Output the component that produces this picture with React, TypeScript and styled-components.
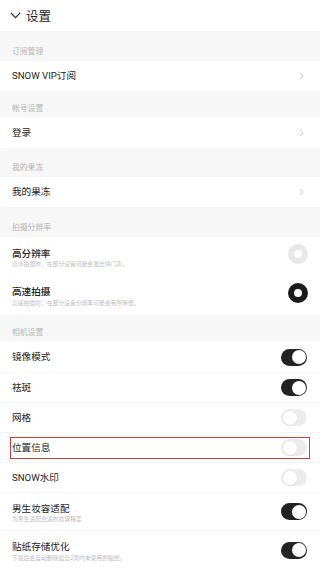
import React from "react";
import styled, { createGlobalStyle, css } from "styled-components";

const Global = createGlobalStyle`
  html, body { margin: 0; padding: 0; background: #ffffff; }
  body { font-family: "Roboto", "Noto Sans CJK SC", sans-serif; -webkit-font-smoothing: antialiased; }
  * { box-sizing: border-box; }
`;

const Page = styled.div`
  width: 320px;
  background: #ffffff;
  display: flex;
  flex-direction: column;
`;

const Header = styled.div`
  height: 31px;
  display: flex;
  align-items: center;
  gap: 5px;
  padding-left: 10px;
  color: #222;
`;

const HeaderTitle = styled.span`
  font-size: 12.5px;
  line-height: 14px;
  font-family: "Noto Sans CJK SC", sans-serif;
  color: #222;
`;

const SectionHeader = styled.div<{ $h: number }>`
  height: ${(p) => p.$h}px;
  background: #f7f7f7;
  display: flex;
  align-items: flex-end;
  padding: 0 12px 5.5px;
  font-size: 7.8px;
  line-height: 10px;
  color: #b5b5b5;
  font-family: "Noto Sans CJK SC", sans-serif;
`;

const Row = styled.div<{ $h: number; $divider?: boolean; $highlight?: boolean }>`
  position: relative;
  height: ${(p) => p.$h}px;
  display: flex;
  align-items: center;
  justify-content: space-between;
  padding: 0 12px;
  background: #fff;
  ${(p) =>
    p.$divider &&
    css`
      border-bottom: 1px solid #f3f3f3;
    `}
  ${(p) =>
    p.$highlight &&
    css`
      &::after {
        content: "";
        position: absolute;
        left: 10px;
        right: 10px;
        top: 4px;
        bottom: 3px;
        border: 1.5px solid #d23a3a;
        pointer-events: none;
      }
    `}
`;

const Label = styled.span`
  font-size: 9.6px;
  line-height: 12px;
  color: #222;
`;

const TextBlock = styled.div`
  display: flex;
  flex-direction: column;
  margin-top: 2px;
`;

const Title = styled.span<{ $strong?: boolean }>`
  font-size: 9.6px;
  line-height: 12px;
  color: #1e1e1e;
  font-weight: ${(p) => (p.$strong ? 500 : 400)};
  font-family: "Noto Sans CJK SC", sans-serif;
`;

const Sub = styled.span`
  margin-top: 1.5px;
  font-size: 5.8px;
  line-height: 8px;
  color: #bdbdbd;
  font-family: "Noto Sans CJK SC", sans-serif;
  white-space: nowrap;
`;

const Chevron = styled.svg`
  width: 5px;
  height: 8px;
  margin-right: 4px;
`;

const Radio = styled.div<{ $on: boolean }>`
  width: 20px;
  height: 20px;
  border-radius: 50%;
  border: 6.5px solid ${(p) => (p.$on ? "#1b1b1b" : "#e8e8e8")};
  background: #fff;
  margin-bottom: 4px;
`;

const Toggle = styled.div<{ $on: boolean }>`
  position: relative;
  width: 26px;
  height: 17px;
  border-radius: 9px;
  margin-right: 1px;
  background: ${(p) => (p.$on ? "#232323" : "#ececec")};
  &::after {
    content: "";
    position: absolute;
    top: 1.5px;
    left: ${(p) => (p.$on ? "10.5px" : "1.5px")};
    width: 14px;
    height: 14px;
    border-radius: 50%;
    background: #fff;
    box-shadow: ${(p) => (p.$on ? "none" : "0 0.5px 1.5px rgba(0,0,0,0.12)")};
  }
`;

const ArrowRight = () => (
  <Chevron viewBox="0 0 5 8">
    <path d="M1 0.8 L4 4 L1 7.2" fill="none" stroke="#c4c4c4" strokeWidth="0.9" />
  </Chevron>
);

type ToggleItem = { label: string; on: boolean; sub?: string; h: number; highlight?: boolean; divider?: boolean };

const cameraItems: ToggleItem[] = [
  { label: "镜像模式", on: true, h: 31, divider: true },
  { label: "祛斑", on: true, h: 30, divider: true },
  { label: "网格", on: false, h: 30, divider: true },
  { label: "位置信息", on: false, h: 30, highlight: true, divider: true },
  { label: "SNOW水印", on: false, h: 30, divider: true },
  { label: "男生妆容适配", on: true, h: 38, sub: "为男生适配合适的妆容程度", divider: true },
  { label: "贴纸存储优化", on: true, h: 38, sub: "下载后会自动删除最近2周内未使用的贴纸。" },
];

export default function App() {
  return (
    <>
      <Global />
      <Page>
        <Header>
          <svg width="11" height="7" viewBox="0 0 11 7">
            <path d="M0.8 0.8 L5.5 5.6 L10.2 0.8" fill="none" stroke="#2a2a2a" strokeWidth="1.2" />
          </svg>
          <HeaderTitle>设置</HeaderTitle>
        </Header>

        <SectionHeader $h={30}>订阅管理</SectionHeader>
        <Row $h={29}>
          <Label>SNOW VIP订阅</Label>
          <ArrowRight />
        </Row>

        <SectionHeader $h={28}>帐号设置</SectionHeader>
        <Row $h={30}>
          <Label>登录</Label>
          <ArrowRight />
        </Row>

        <SectionHeader $h={29}>我的果冻</SectionHeader>
        <Row $h={30}>
          <Label>我的果冻</Label>
          <ArrowRight />
        </Row>

        <SectionHeader $h={30}>拍摄分辨率</SectionHeader>
        <Row $h={38.5}>
          <TextBlock>
            <Title $strong>高分辨率</Title>
            <Sub>高清拍摄时，在部分设备可能会发出快门声。</Sub>
          </TextBlock>
          <Radio $on={false} />
        </Row>
        <Row $h={38.5}>
          <TextBlock>
            <Title $strong>高速拍摄</Title>
            <Sub>高速拍摄时，在部分设备分辨率可能会有所降低。</Sub>
          </TextBlock>
          <Radio $on={true} />
        </Row>

        <SectionHeader $h={28}>相机设置</SectionHeader>
        {cameraItems.map((it) => (
          <Row key={it.label} $h={it.h} $divider={it.divider} $highlight={it.highlight}>
            {it.sub ? (
              <TextBlock>
                <Title>{it.label}</Title>
                <Sub>{it.sub}</Sub>
              </TextBlock>
            ) : (
              <Label>{it.label}</Label>
            )}
            <Toggle $on={it.on} />
          </Row>
        ))}
      </Page>
    </>
  );
}
